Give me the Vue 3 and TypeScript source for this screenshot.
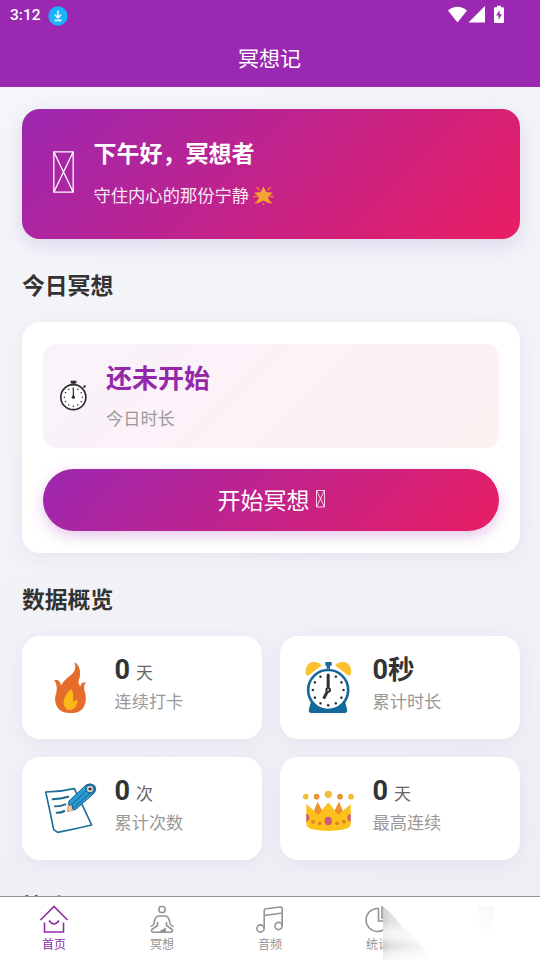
<script setup lang="ts">
interface Stat {
  icon: 'fire' | 'clock' | 'memo' | 'crown'
  value: string
  unit: string
  big?: boolean
  label: string
  viewBox: string
}

const stats: Stat[] = [
  { icon: 'fire', value: '0', unit: '天', label: '连续打卡', viewBox: '75 90 156 165' },
  { icon: 'clock', value: '0', unit: '秒', big: true, label: '累计时长', viewBox: '99 90 156 165' },
  { icon: 'memo', value: '0', unit: '次', label: '累计次数', viewBox: '75 93 156 165' },
  { icon: 'crown', value: '0', unit: '天', label: '最高连续', viewBox: '99 93 156 165' },
]

const clockDots: number[] = Array.from({ length: 12 }, (_, i) => i * 30)
const tabs: string[] = ['首页', '冥想', '音频', '统计', '']
</script>

<template>
  <div class="screen">
    <header class="top">
      <div class="status">
        <span class="time">3:12</span>
        <svg class="dl" viewBox="0 0 20 20">
          <circle cx="10" cy="10" r="9.7" fill="#17b4fb" />
          <path d="M10 4.500v7M6.900 8.800l3.100 3.100 3.100-3.100M6.500 14.400h7" fill="none" stroke="#e9f8ff" stroke-width="1.6" />
        </svg>
        <svg class="signals" viewBox="0 0 60 20">
          <path d="M0 6.500Q9.500-1 19 6.500L9.500 18.500Z" fill="#fff" />
          <path d="M37 2v16.500H20.500Z" fill="#fff" />
          <path d="M49 1.800h4v1.400h2a1 1 0 0 1 1 1v13.800a1 1 0 0 1-1 1h-8a1 1 0 0 1-1-1V4.200a1 1 0 0 1 1-1h2Z" fill="#fff" />
          <path d="M51.600 6l-3.400 5.600h2.400v4.400l3.300-5.700h-2.300Z" fill="#9b28b0" />
        </svg>
      </div>
      <h1>冥想记</h1>
    </header>

    <main class="content">
      <section class="banner">
        <svg class="tofu" viewBox="0 0 21 42">
          <path d="M.8.8h19.400v40.400H.8ZM.8.8l19.400 40.400M20.200.8L.8 41.200" fill="none" stroke="#fff" stroke-width="1.300" />
        </svg>
        <div class="words">
          <div class="greeting">下午好，冥想者</div>
          <div class="motto">
            <span>守住内心的那份宁静</span>
            <svg viewBox="0 0 60 54">
              <path d="M12 4l6 7M49 4l-6 7M2 30h9M49 30h9M7 48l9-7M53 48l-9-7M30 50v3" stroke="#f07a2c" stroke-width="5" stroke-linecap="round" />
              <path d="M30 1l8 16 19 2-14 12 7 20-20-10-20 10 7-20L3 19l19-2Z" fill="#fbb12c" />
            </svg>
          </div>
        </div>
      </section>

      <h2>今日冥想</h2>
      <section class="card today">
        <div class="summary">
          <svg class="watch" viewBox="0 0 84 92">
            <circle cx="40" cy="51" r="37.500" fill="#fff" stroke="#2d2b2d" stroke-width="5" />
            <path d="M32 2h17v8H32ZM38 9h5v5h-5Z" fill="#2d2b2d" />
            <path d="M69 22l5-4" stroke="#2d2b2d" stroke-width="3" />
            <circle cx="74" cy="19" r="3.500" fill="#2d2b2d" />
            <circle v-for="a in clockDots" :key="a" cx="40" cy="24" r="2.200" fill="#2d2b2d" :transform="`rotate(${a} 40 51)`" />
            <path d="M40 51V24" stroke="#2d2b2d" stroke-width="3.500" />
            <circle cx="40" cy="51" r="5" fill="#2d2b2d" />
          </svg>
          <div class="words">
            <div class="state">还未开始</div>
            <div class="caption">今日时长</div>
          </div>
        </div>
        <button class="start">
          <span>开始冥想</span>
          <svg viewBox="0 0 9 18">
            <path d="M.5.500h8v16.500h-8ZM.5.500l8 16.500M8.500.500l-8 16.500" fill="none" stroke="#fff" stroke-width=".8" />
          </svg>
        </button>
      </section>

      <h2>数据概览</h2>
      <section class="grid">
        <article v-for="s in stats" :key="s.label" class="card stat">
          <svg class="emoji" :viewBox="s.viewBox">
            <g v-if="s.icon === 'fire'">
              <path d="M163 96C181 105 184 132 177 149Q173 162 182 169Q182 156 198 157Q191 163 193 181C199 199 200 216 191 231C181 248 163 250 148 249C130 249 116 242 109 226C104 214 104 201 109 188C112 174 110 158 102 151Q119 145 123 166Q130 153 145 141C166 127 169 114 163 96Z" fill="#e66c2b" />
              <path d="M153 177C139 191 129 207 131 222C134 235 141 240 149 240C161 240 172 230 173 210Q165 210 160 216C157 204 164 192 153 177Z" fill="#fbb916" />
            </g>
            <g v-else-if="s.icon === 'clock'">
              <path d="M107 132C105 107 119 94 132 96C145 96 153 103 154 107L113 138Z M243 132C246 107 231 94 218 96C205 96 197 103 196 107L237 138Z" fill="#fbc02b" />
              <path d="M166 96h19v11h-5v9h-10v-9h-4ZM124 211L117 237Q114 249 124 249H224Q234 249 231 237L224 211Z" fill="#15699a" />
              <circle cx="174.500" cy="180" r="60" fill="#fff" stroke="#15699a" stroke-width="8" />
              <circle v-for="a in clockDots" :key="a" cx="174.500" cy="134" r="3.800" fill="#303030" :transform="`rotate(${a} 174.500 180)`" />
              <path d="M174.500 180V135" stroke="#303030" stroke-width="9" />
              <path d="M174.500 180L161 206" stroke="#303030" stroke-width="9" />
              <circle cx="174.500" cy="180" r="6" fill="#aaa" stroke="#303030" stroke-width="5" />
            </g>
            <g v-else-if="s.icon === 'memo'">
              <path d="M77 126Q121 126 163 116Q190 170 215 225Q165 237 113 247L101 239Q90 182 77 126Z" fill="#fff" stroke="#1d6e9a" stroke-width="5" stroke-linejoin="round" />
              <path d="M98 148q23-1 47-8M105 169q14 1 31-6M110 188q12 1 23-5" fill="none" stroke="#1c668f" stroke-width="6" stroke-linecap="round" />
              <path d="M145 159L142 185L163 181Z" fill="#f1c6a0" stroke="#8d6d5a" stroke-width="1.500" />
              <path d="M146 154L198 105Q211 97 224 107Q231 118 223 129L166 179L158 177L157 165L147 165Z" fill="#2b9cd3" stroke="#13618e" stroke-width="3" />
              <path d="M155 164L202 119M160 174L215 125" stroke="#13618e" stroke-width="3" />
              <circle cx="210" cy="117" r="12" fill="#d6cbc6" stroke="#13618e" stroke-width="4" />
              <ellipse cx="210" cy="117" rx="5" ry="3.500" fill="#333" />
            </g>
            <g v-else>
              <path d="M143 156L158 190L143 207L129 190ZM207 156L221 190L207 207L192 190Z" fill="#ef922c" />
              <path d="M109 162L145 194L175 157L205 194L242 162V222Q242 233 224 238Q175 248 127 238Q109 233 109 222Z" fill="#fcc21b" />
              <path d="M143 156L133 181L145 194L156 181ZM207 156L194 181L205 194L217 181Z" fill="#ef922c" />
              <path d="M109 191Q118 194 118 203T109 216ZM242 191Q232 194 232 203T242 216Z" fill="#ce5980" />
              <ellipse cx="175" cy="213" rx="11" ry="12.500" fill="#ce5980" />
              <g fill="#e58025">
                <circle cx="129" cy="215" r="6" /><circle cx="149" cy="220" r="5.500" /><circle cx="201" cy="220" r="5.500" /><circle cx="222" cy="215" r="6" />
              </g>
              <g fill="#f0bf37"><circle cx="107" cy="140" r="8.500" /><circle cx="175" cy="133" r="11" /><circle cx="243" cy="140" r="8.500" /></g>
              <g fill="#e99434"><circle cx="140" cy="140" r="8.500" /><circle cx="210" cy="140" r="8.500" /></g>
            </g>
          </svg>
          <div>
            <div class="figure">{{ s.value }}<span :class="s.big ? 'unit-big' : 'unit'">{{ s.unit }}</span></div>
            <div class="caption">{{ s.label }}</div>
          </div>
        </article>
      </section>

      <h2>快速入口</h2>
    </main>

    <nav class="tabs">
      <div v-for="(t, i) in tabs" :key="i" class="tab" :class="{ active: i === 0 }">
        <svg viewBox="0 0 30 30">
          <path v-if="i === 0" d="M1.500 16L15 2.500 28.500 16M5.500 18.500V28h19V18.500M10 16.500q5 7 10 0" />
          <g v-else-if="i === 1">
            <rect x="12" y="2.500" width="6" height="6" rx="2.200" />
            <path d="M3.500 22.500Q7 22 7.500 17Q8.500 12 12 12H18Q21.500 12 22.500 17Q23 22 26.500 22.500M10.500 18V21.500L4.800 25.500Q3.500 28.300 7 28.300H23Q26.500 28.300 25.200 25.500L19.500 21.500V18M12.500 28L19 24.500M16 28l3-1.500" />
          </g>
          <g v-else-if="i === 2">
            <circle cx="5.500" cy="24.500" r="3.600" /><circle cx="23.500" cy="22" r="3.600" />
            <path d="M9.200 24.500V6.500Q9.200 5 11 4.700L25.500 3Q27.200 3 27.200 5V22M9.200 11.500L27.200 9" />
          </g>
          <path v-else-if="i === 3" d="M14.500 4.500A11.500 11.500 0 1 0 26 17H15.500V4.500ZM19 3V14H28Q28 5 19 3Z" />
        </svg>
        <span>{{ t }}</span>
      </div>
      <svg class="fade" viewBox="383 897 157 63">
        <defs>
          <linearGradient id="smear" x1="382" x2="428" y1="0" y2="0" gradientUnits="userSpaceOnUse">
            <stop offset="0" stop-color="#999" stop-opacity=".7" />
            <stop offset=".2" stop-color="#b4b4b4" stop-opacity=".55" />
            <stop offset="1" stop-color="#ddd" stop-opacity=".3" />
          </linearGradient>
          <linearGradient id="bands" x1="0" x2="0" y1="906" y2="960" gradientUnits="userSpaceOnUse">
            <stop offset="0" stop-color="#fff" stop-opacity=".3" />
            <stop offset=".3" stop-color="#fff" stop-opacity=".3" />
            <stop offset=".48" stop-color="#fff" stop-opacity=".75" />
            <stop offset=".58" stop-color="#fff" stop-opacity=".7" />
            <stop offset=".74" stop-color="#fff" stop-opacity=".2" />
            <stop offset=".86" stop-color="#fff" stop-opacity=".65" />
            <stop offset="1" stop-color="#fff" stop-opacity=".85" />
          </linearGradient>
          <linearGradient id="ghost" x1="0" x2="0" y1="0" y2="1">
            <stop offset="0" stop-color="#f8f8f8" /><stop offset="1" stop-color="#fff" />
          </linearGradient>
        </defs>
        <path d="M383 897H540V960H383Z" fill="#fff" />
        <path d="M382 906Q391 912 400 924L434 960H382Z" fill="url(#smear)" />
        <path d="M382 906Q391 912 400 924L434 960H382Z" fill="url(#bands)" />
        <path d="M479 906h14v30h-14Z" fill="url(#ghost)" />
      </svg>
    </nav>
  </div>
</template>

<style>
body {
  margin: 0;
}
</style>

<style scoped>
.screen {
  width: 540px;
  height: 960px;
  overflow: hidden;
  display: flex;
  flex-direction: column;
  font-family: Roboto, "Noto Sans CJK SC", sans-serif;
  color: #333;
  background: linear-gradient(160deg, #f5f7fa, #efedf4);
}
.top {
  height: 87px;
  flex: none;
  background: #9b28b0;
  color: #fff;
}
.status {
  height: 31px;
  display: flex;
  align-items: center;
  padding: 0 35px 0 10px;
}
.time {
  font-size: 15.5px;
  font-weight: 500;
  line-height: 31px;
  width: 37.500px;
}
.dl {
  width: 20px;
  height: 20px;
}
.signals {
  width: 60px;
  height: 20px;
  margin-left: auto;
  margin-right: -3px;
  margin-top: -3px;
}
h1 {
  margin: 0;
  padding-right: 1px;
  text-align: center;
  font-size: 21px;
  font-weight: 400;
  line-height: 56px;
}
.content {
  flex: 1;
  min-height: 0;
  overflow: hidden;
  padding: 22px 20px 0 22px;
}
.banner {
  height: 130px;
  box-sizing: border-box;
  border-radius: 18px;
  padding: 0 31px 5px;
  display: flex;
  align-items: center;
  gap: 20px;
  color: #fff;
  background: linear-gradient(135deg, #9c27b0, #e91e63);
  box-shadow: 0 6px 20px rgba(110, 60, 180, 0.16);
}
.words {
  padding-top: 6px;
}
.banner .words {
  margin-left: -0.5px;
}
.tofu {
  width: 21px;
  height: 42px;
}
.greeting {
  font-size: 23px;
  font-weight: 700;
  line-height: 42px;
}
.motto {
  display: flex;
  align-items: center;
  gap: 4px;
  font-size: 17.3px;
  line-height: 40px;
  opacity: 0.9;
}
.motto svg {
  width: 21px;
  height: 19px;
}
h2 {
  margin: 0;
  padding: 31px 0 18px;
  font-size: 22.8px;
  font-weight: 700;
  line-height: 34px;
}
.card {
  background: #fff;
  border-radius: 18px;
  box-shadow: 0 4px 18px rgba(100, 60, 160, 0.07);
}
.today {
  height: 231px;
  box-sizing: border-box;
  padding: 22px 21px;
  display: flex;
  flex-direction: column;
  gap: 21px;
}
.summary {
  height: 104px;
  box-sizing: border-box;
  padding: 0 16px 3px 17px;
  display: flex;
  align-items: center;
  gap: 18px;
  border-radius: 13px;
  background: linear-gradient(135deg, #f8f3fb, #fef1f7 50%, #fdf1f2);
}
.watch {
  width: 28px;
  height: 31px;
  margin-top: 2px;
}
.state {
  font-size: 26px;
  font-weight: 700;
  line-height: 42px;
  color: #9428a8;
}
.summary .caption {
  line-height: 38px;
}
.caption {
  font-size: 17.2px;
  line-height: 28px;
  color: #999;
}
.start {
  height: 62px;
  border: 0;
  border-radius: 31px;
  padding: 0 0 2px;
  display: flex;
  align-items: center;
  justify-content: center;
  gap: 6px;
  font: 400 23px Roboto, "Noto Sans CJK SC", sans-serif;
  color: #fff;
  background: linear-gradient(135deg, #9c27b0, #e91e63);
  box-shadow: 0 5px 14px rgba(156, 39, 176, 0.26);
}
.start svg {
  width: 9px;
  height: 18px;
}
.grid {
  display: grid;
  grid-template-columns: 240px 240px;
  gap: 18px;
}
.stat {
  height: 103px;
  box-sizing: border-box;
  padding: 0 23px;
  display: flex;
  align-items: center;
  gap: 18px;
}
.stat > div {
  padding-bottom: 7px;
  margin-left: -0.5px;
}
.emoji {
  width: 52px;
  height: 55px;
}
.figure {
  height: 36px;
  font-size: 27px;
  font-weight: 700;
  line-height: 36px;
}
.unit {
  margin-left: 6px;
  font-size: 17px;
  font-weight: 400;
  color: #666;
}
.unit-big {
  font-size: 26.500px;
}
.tabs {
  position: relative;
  height: 64px;
  box-sizing: border-box;
  flex: none;
  display: flex;
  border-top: 1px solid #929292;
  background: #fff;
}
.tab {
  flex: 1;
  display: flex;
  flex-direction: column;
  align-items: center;
  padding-top: 7px;
  font-size: 12px;
  line-height: 18px;
  color: #949494;
}
.tab svg {
  width: 30px;
  height: 30px;
  margin-bottom: 2px;
  fill: none;
  stroke: currentColor;
  stroke-width: 1.6;
}
.active {
  color: #8f2ca4;
}
.tabs .fade {
  position: absolute;
  right: 0;
  top: 0;
  width: 157px;
  height: 63px;
}
</style>
